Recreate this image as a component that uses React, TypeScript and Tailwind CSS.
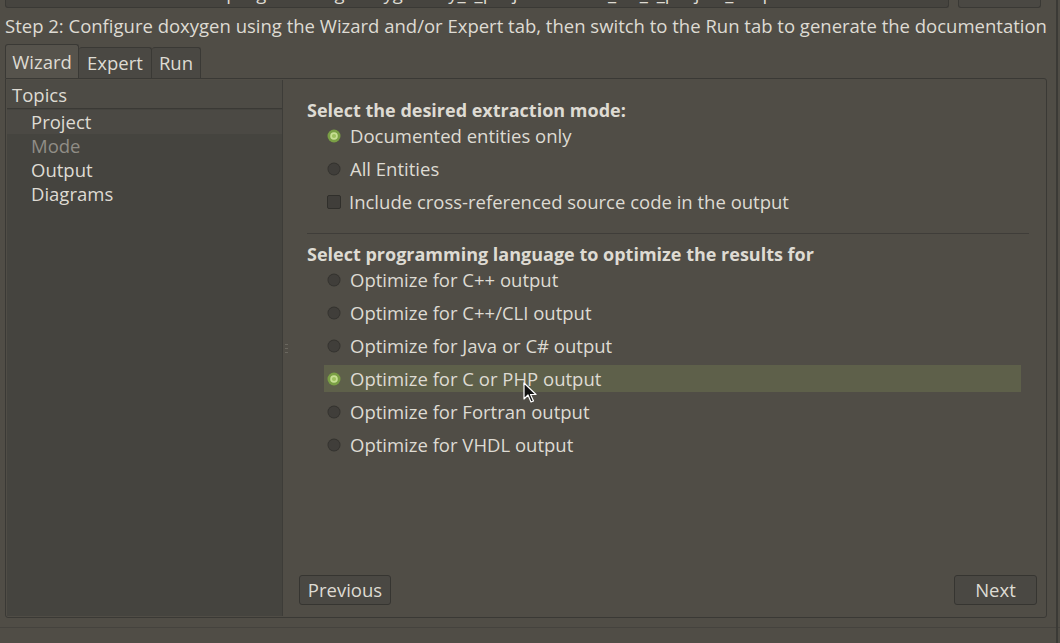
import React from "react";

const langOptions = [
  "Optimize for C++ output",
  "Optimize for C++/CLI output",
  "Optimize for Java or C# output",
  "Optimize for C or PHP output",
  "Optimize for Fortran output",
  "Optimize for VHDL output",
];

const topics = ["Project", "Mode", "Output", "Diagrams"];

const Radio = ({ checked }: { checked?: boolean }) => (
  <svg width="14" height="14" viewBox="0 0 14 14" className="shrink-0">
    {checked ? (
      <>
        <circle cx="7" cy="7" r="6.5" fill="#7a9f45" />
        <circle cx="7" cy="7" r="3.8" fill="#c7df93" />
        <circle cx="7" cy="7" r="2.1" fill="#9cc15e" />
      </>
    ) : (
      <>
        <circle cx="7" cy="7" r="6.5" fill="#34332f" />
        <circle cx="7" cy="7" r="5.6" fill="#403e3a" />
      </>
    )}
  </svg>
);

const Checkbox = () => (
  <div className="w-[14px] h-[14px] shrink-0 rounded-[2px] border border-[#302f2b] bg-[#403e3a]" />
);

const Cursor = () => (
  <svg width="14" height="22" viewBox="0 0 14 22" className="absolute left-[523px] top-[382px]">
    <path d="M1 1 L1 17 L5 13 L8 20 L10.5 19 L7.5 12.5 L13 12.5 Z" fill="#111" stroke="#fff" strokeWidth="1.2" strokeLinejoin="round" />
  </svg>
);

export default function App() {
  return (
    <div
      className="relative w-[1060px] h-[643px] overflow-hidden bg-[#504d46] text-[#dedbd3] text-[18.5px]"
      style={{ fontFamily: "'Open Sans', 'Noto Sans', sans-serif" }}
    >
      {/* cut-off path field and browse button */}
      <div className="flex gap-[9px] px-[5px] h-[8px]">
        <div className="w-[944px] h-[8px] border border-t-0 border-[#3a3935] rounded-b-[3px] bg-[#46443f] overflow-hidden">
          <div className="pl-[6px] -mt-[16px] leading-[18px] whitespace-nowrap">
            /home/user/Documents/programming/doxygen/my_c_project/source_dir_c_project_output/html
          </div>
        </div>
        <div className="w-[83px] h-[8px] border border-t-0 border-[#3a3935] rounded-b-[3px] bg-[#4a4843]" />
      </div>

      {/* step hint */}
      <div className="pl-[5px] h-[36px] flex items-center whitespace-nowrap">
        Step 2: Configure doxygen using the Wizard and/or Expert tab, then switch to the Run tab to generate the documentation
      </div>

      {/* tabs */}
      <div className="flex items-end pl-[5px] h-[34px]">
        <div className="h-[34px] w-[74px] border border-b-0 border-[#3a3935] rounded-t-[3px] bg-[#56534c] flex items-center justify-center">
          Wizard
        </div>
        <div className="h-[31px] w-[73px] border border-l-0 border-b-0 border-[#3a3935] rounded-t-[3px] bg-[#4a4843] flex items-center justify-center">
          Expert
        </div>
        <div className="h-[31px] w-[49px] border border-l-0 border-b-0 border-[#3a3935] rounded-t-[3px] bg-[#4a4843] flex items-center justify-center">
          Run
        </div>
      </div>

      {/* tab pane */}
      <div className="ml-[5px] w-[1042px] h-[540px] border border-[#3a3935] rounded-b-[3px] rounded-tr-[3px] bg-[#504d46] flex p-[1px]">
        {/* topics tree */}
        <div className="w-[276px] h-full bg-[#45443f] border-r border-[#3d3c38] flex flex-col">
          <div className="h-[29px] bg-[#4d4b45] border-b border-[#3a3935] flex items-center pl-[5px] pt-[1px]">Topics</div>
          <div className="pt-[1px]">
            {topics.map((t, i) => (
              <div
                key={t}
                className={
                  "h-[24px] flex items-center pl-[24px] " +
                  (i === 0 ? "bg-[#4b4944] " : "") +
                  (i === 1 ? "text-[#908d86]" : "")
                }
              >
                {t}
              </div>
            ))}
          </div>
        </div>

        {/* splitter */}
        <div className="w-[7px] flex flex-col items-center justify-center gap-[3px]">
          <div className="w-[3px] h-[1px] bg-[#6a675f]" />
          <div className="w-[3px] h-[1px] bg-[#6a675f]" />
          <div className="w-[3px] h-[1px] bg-[#6a675f]" />
        </div>

        {/* wizard page */}
        <div className="flex-1 flex flex-col pl-[9px] pr-[8px]">
          <div className="pl-[8px] pr-[8px] pt-[18px]">
            <div className="font-bold text-[18px] h-[24px] flex items-center">Select the desired extraction mode:</div>
            <div className="pl-[20px] -mt-[3px]">
              <div className="h-[33px] flex items-center gap-[9px]">
                <Radio checked />
                <span>Documented entities only</span>
              </div>
              <div className="h-[33px] flex items-center gap-[9px]">
                <Radio />
                <span>All Entities</span>
              </div>
              <div className="h-[33px] flex items-center gap-[8px]">
                <Checkbox />
                <span>Include cross-referenced source code in the output</span>
              </div>
            </div>
            <div className="mt-[15px] h-[1px] bg-[#3f3d39]" />
            <div className="mt-[8px] font-bold text-[18px] h-[24px] flex items-center">Select programming language to optimize the results for</div>
            <div className="pl-[17px] pr-[8px] -mt-[3px]">
              {langOptions.map((o, i) => (
                <div key={o} className="h-[33px] flex items-center">
                  <div className={"flex items-center gap-[9px] w-full h-[27px] pl-[3px] " + (i === 3 ? "bg-[#5e604a]" : "")}>
                    <Radio checked={i === 3} />
                    <span>{o}</span>
                  </div>
                </div>
              ))}
            </div>
          </div>

          <div className="mt-auto mb-[11px] flex justify-between">
            <button className="h-[30px] w-[92px] border border-[#363531] rounded-[3px] bg-[#4a4843] text-[#dedbd3] flex items-center justify-center">
              Previous
            </button>
            <button className="h-[30px] w-[83px] border border-[#363531] rounded-[3px] bg-[#4a4843] text-[#dedbd3] flex items-center justify-center">
              Next
            </button>
          </div>
        </div>
      </div>

      {/* status bar */}
      <div className="mt-[9px] h-[1px] bg-[#45433e]" />

      {/* window edge on the right */}
      <div className="absolute right-[2px] top-0 h-full w-[2px] bg-[#3b3a36]" />

      <Cursor />
    </div>
  );
}
